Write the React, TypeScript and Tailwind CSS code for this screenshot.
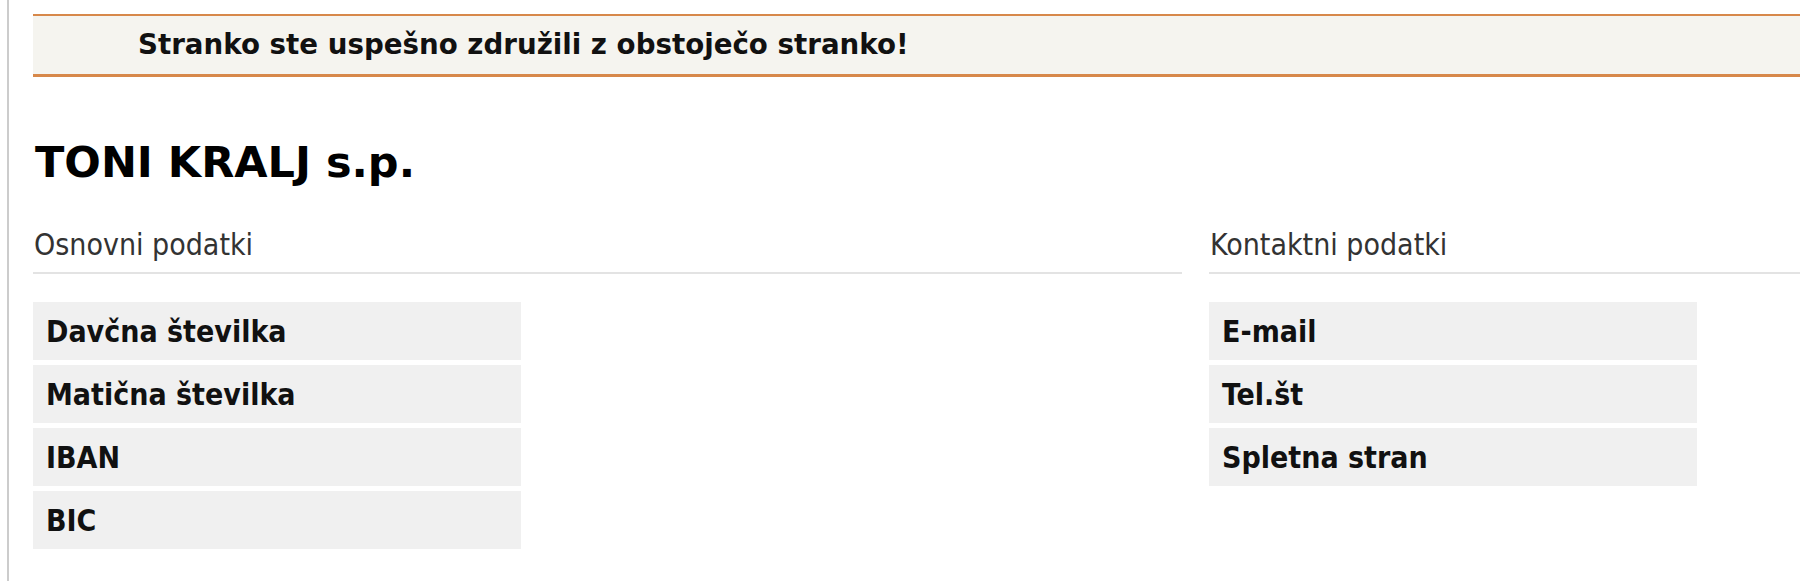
const basicRows = ['Davčna številka', 'Matična številka', 'IBAN', 'BIC'];
const contactRows = ['E-mail', 'Tel.št', 'Spletna stran'];

function Section({ title, rows }: { title: string; rows: string[] }) {
  return (
    <div className="w-[1149px] shrink-0">
      <div className="border-b-2 border-[#e3e3e3] pb-[9px] pl-[1px] text-[30px] leading-[36px] text-[#333] [font-family:'DejaVu_Sans_Condensed','DejaVu_Sans',sans-serif]">
        {title}
      </div>
      <div className="mt-[28px] flex flex-col gap-[5px]">
        {rows.map((label) => (
          <div
            key={label}
            className="flex h-[58px] w-[488px] items-center bg-[#f0f0f0] pl-[13px] text-[30px] font-bold text-[#111] [font-family:'DejaVu_Sans_Condensed','DejaVu_Sans',sans-serif]"
          >
            {label}
          </div>
        ))}
      </div>
    </div>
  );
}

export default function App() {
  return (
    <div className="h-[581px] w-[1800px] overflow-hidden bg-white">
      <div className="ml-[7px] h-full border-l-2 border-[#cccccc] pt-[14px]">
        <div className="ml-[24px] flex h-[63px] w-[2000px] items-center border-t-2 border-b-[3px] border-[#d7884a] bg-[#f5f4ef] pl-[105px] text-[27.7px] font-bold text-[#111] [font-family:'DejaVu_Sans',Verdana,sans-serif]">
          Stranko ste uspešno združili z obstoječo stranko!
        </div>

        <h1 className="ml-[26px] mt-[61px] text-[43px] font-bold leading-[48px] text-black [font-family:'DejaVu_Sans',Verdana,sans-serif]">
          TONI KRALJ s.p.
        </h1>

        <div className="ml-[24px] mt-[41px] flex gap-[27px]">
          <Section title="Osnovni podatki" rows={basicRows} />
          <Section title="Kontaktni podatki" rows={contactRows} />
        </div>
      </div>
    </div>
  );
}
